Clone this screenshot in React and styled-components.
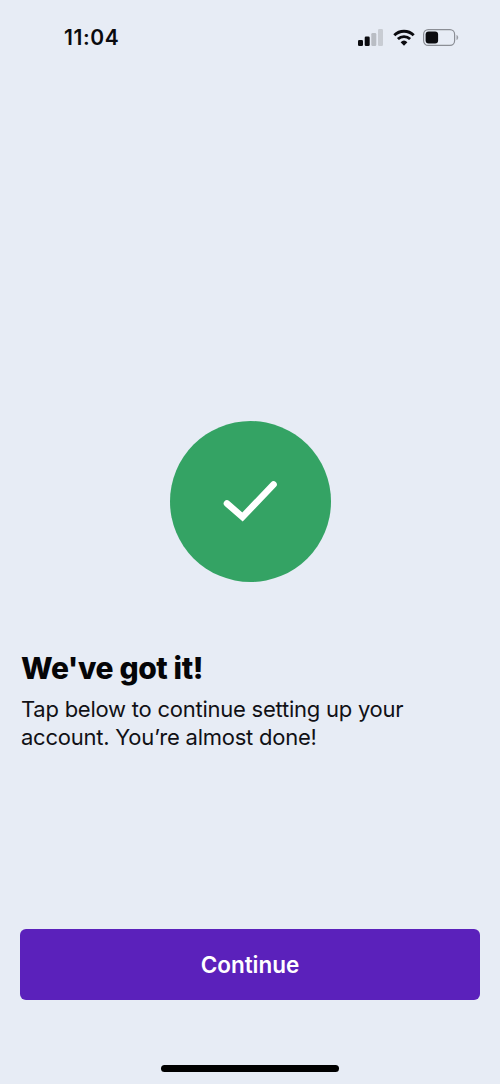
import React from "react";
import styled, { createGlobalStyle } from "styled-components";

const Global = createGlobalStyle`
  html, body { margin: 0; padding: 0; background: #e7ecf5; }
`;

const Screen = styled.div`
  width: 500px;
  height: 1084px;
  box-sizing: border-box;
  background: #e7ecf5;
  font-family: Inter, "Liberation Sans", sans-serif;
  color: #0b0b0f;
  display: flex;
  flex-direction: column;
  overflow: hidden;
`;

const StatusBar = styled.div`
  height: 75px;
  box-sizing: border-box;
  padding: 0 41px 0 64px;
  display: flex;
  align-items: center;
  justify-content: space-between;
`;

const Time = styled.span`
  font-size: 21px;
  font-weight: 600;
  letter-spacing: 0.6px;
`;

const StatusIcons = styled.div`
  display: flex;
  align-items: center;
  gap: 8px;
`;

const Hero = styled.div`
  margin-top: 346px;
  display: flex;
  justify-content: center;
`;

const CheckCircle = styled.div`
  width: 161px;
  height: 161px;
  border-radius: 50%;
  background: #34a364;
  display: flex;
  align-items: center;
  justify-content: center;
`;

const Copy = styled.div`
  margin-top: 67px;
  padding: 0 21px;
`;

const Title = styled.h1`
  margin: 0;
  font-size: 30px;
  line-height: 38px;
  font-weight: 800;
  letter-spacing: -0.4px;
  color: #050507;
`;

const Body = styled.p`
  margin: 8px 0 0;
  width: 420px;
  font-size: 22px;
  line-height: 28px;
  font-weight: 400;
  letter-spacing: -0.24px;
  color: #111116;
`;

const Footer = styled.div`
  margin-top: auto;
  padding: 0 20px 12px;
  display: flex;
  flex-direction: column;
  align-items: center;
`;

const Continue = styled.button`
  width: 460px;
  height: 71px;
  border: 0;
  border-radius: 6px;
  background: #5b21bb;
  color: #fff;
  font-family: inherit;
  font-size: 22.5px;
  font-weight: 600;
`;

const HomeBar = styled.div`
  margin-top: 65px;
  width: 178px;
  height: 7px;
  border-radius: 4px;
  background: #000;
`;

export default function App() {
  return (
    <Screen>
      <Global />
      <StatusBar>
        <Time>11:04</Time>
        <StatusIcons>
          <svg width="25" height="17" viewBox="0 0 25 17">
            <rect x="0" y="11" width="5" height="6" rx="1.3" fill="#0b0b0f" />
            <rect x="6.7" y="7.5" width="5" height="9.5" rx="1.3" fill="#0b0b0f" />
            <rect x="13.3" y="4" width="5" height="13" rx="1.3" fill="#b9bdc4" />
            <rect x="20" y="0" width="5" height="17" rx="1.3" fill="#c8ccd3" />
          </svg>
          <svg width="24" height="17" viewBox="-2 0 24 17" fill="none" stroke="#0b0b0f" strokeWidth="2.9">
            <path d="M1.3 6.2a14 14 0 0 1 19.4 0" />
            <path d="M4.9 10a9 9 0 0 1 12.2 0" />
            <path d="M11 16.8l-3.4-3.6a5 5 0 0 1 6.8 0z" fill="#0b0b0f" stroke="none" />
          </svg>
          <svg width="36" height="17" viewBox="0 0 36 17">
            <rect x="0.6" y="0.6" width="31" height="15.8" rx="4.6" fill="none" stroke="#8b8e95" strokeWidth="1.2" />
            <rect x="2.6" y="2.6" width="12.5" height="11.8" rx="3" fill="#0b0b0f" />
            <path d="M33.5 6v5c1-.3 1.7-1.3 1.7-2.5S34.500 6.300 33.500 6z" fill="#9a9da4" />
          </svg>
        </StatusIcons>
      </StatusBar>
      <Hero>
        <CheckCircle>
          <svg width="58" height="46" viewBox="0 0 58 46" fill="none" stroke="#fff" strokeWidth="6.6" strokeLinecap="round" strokeLinejoin="miter">
            <path d="M6 24.500 L21.500 38 L52.500 5.500" />
          </svg>
        </CheckCircle>
      </Hero>
      <Copy>
        <Title>We've got it!</Title>
        <Body>Tap below to continue setting up your account. You’re almost done!</Body>
      </Copy>
      <Footer>
        <Continue>Continue</Continue>
        <HomeBar />
      </Footer>
    </Screen>
  );
}
